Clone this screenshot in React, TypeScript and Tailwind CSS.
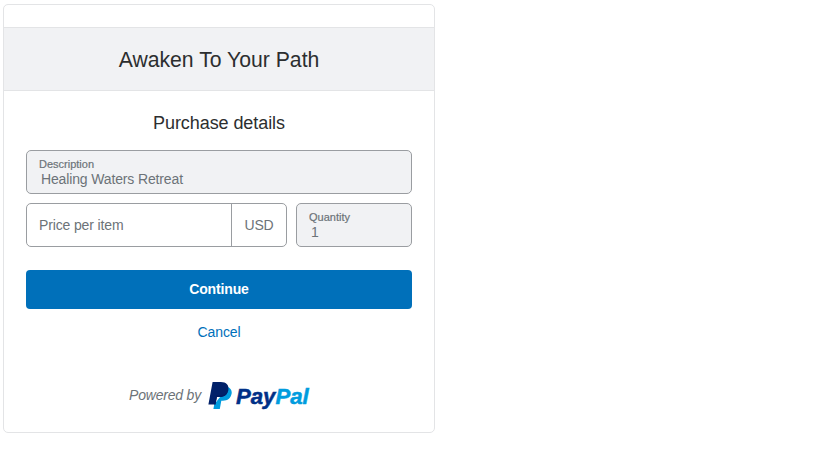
export default function App() {
  return (
    <div className="min-h-[460px] bg-white pl-[3px] pt-[4px] font-['Liberation_Sans',Arial,sans-serif] text-[#2c2e2f]">
      <div className="flex h-[429px] w-[432px] flex-col rounded-[5px] border border-[#e3e4e6] bg-white">
        <div className="mt-[22px] flex h-[64px] items-center justify-center border-y border-[#e3e4e6] bg-[#f1f2f4] pt-[2px] text-[21.2px] leading-none">
          Awaken To Your Path
        </div>
        <div className="flex flex-1 flex-col px-[22px]">
          <div className="mt-[21px] h-[22px] text-center text-[18px] leading-[22px] tracking-[-0.08px]">Purchase details</div>
          <div className="mt-[16px] flex h-[44px] flex-col rounded-[5px] border border-[#9a9da1] bg-[#f1f2f4] pl-[12px]">
            <div className="mt-[7px] h-[13px] text-[11px] leading-[13px] text-[#6c7378] [-webkit-text-stroke:0.2px_#6c7378]">Description</div>
            <div className="ml-[2px] text-[14px] leading-[17px] tracking-[-0.14px] text-[#6c7378]">Healing Waters Retreat</div>
          </div>
          <div className="mt-[9px] flex h-[44px] gap-[9px]">
            <div className="flex w-[261px] rounded-[5px] border border-[#9a9da1] bg-white text-[14px] tracking-[-0.14px] text-[#6c7378]">
              <div className="flex flex-1 items-center pl-[12px]">Price per item</div>
              <div className="flex w-[55px] items-center justify-center border-l border-[#9a9da1]">USD</div>
            </div>
            <div className="flex flex-1 flex-col rounded-[5px] border border-[#9a9da1] bg-[#f1f2f4] pl-[12px]">
              <div className="mt-[7px] h-[13px] text-[11px] leading-[13px] text-[#6c7378] [-webkit-text-stroke:0.2px_#6c7378]">Quantity</div>
              <div className="ml-[2px] text-[14px] leading-[17px] text-[#6c7378]">1</div>
            </div>
          </div>
          <button className="mt-[23px] flex h-[39px] items-center justify-center rounded-[4px] bg-[#0070ba] text-[14px] font-bold tracking-[-0.14px] text-white">
            Continue
          </button>
          <div className="mt-[15px] h-[17px] text-center text-[14px] leading-[17px] tracking-[-0.1px] text-[#0070ba]">Cancel</div>
          <div className="ml-[2px] mt-[35px] flex h-[36px] items-center">
            <span className="ml-[101px] mt-[2px] text-[14px] italic tracking-[-0.2px] text-[#6c7378]">Powered by</span>
            <svg className="ml-[7px] mt-[3px]" width="24" height="27" viewBox="0 0 24 27" aria-hidden="true">
              <path fill="#009cde" d="M20 5c2.700 1.300 4.200 3.700 3.600 6.800-.9 4.500-4 6.900-8.600 6.900h-1.700L11.800 27H5.400l.9-4.800z" />
              <path fill="#012169" d="M4.600 0h8.200c5.700 0 8.300 3.200 7.600 7.800-.8 4.700-4 7.300-8.800 7.300H8.900l-1.500 7.500H.4z" />
              <path fill="#001c64" d="M20.300 8c-.9 4.400-4 7-8.700 7.100H8.900l-1.500 7.500H6.300l1.900-9.500h5.300c3 0 5.300-1.300 6.800-5.100z" />
            </svg>
            <span className="ml-[4px] mt-[7px] text-[22.2px] font-bold italic leading-none [-webkit-text-stroke:0.5px_currentColor]">
              <span className="text-[#003087]">Pay</span>
              <span className="text-[#009cde]">Pal</span>
            </span>
          </div>
        </div>
      </div>
    </div>
  );
}
